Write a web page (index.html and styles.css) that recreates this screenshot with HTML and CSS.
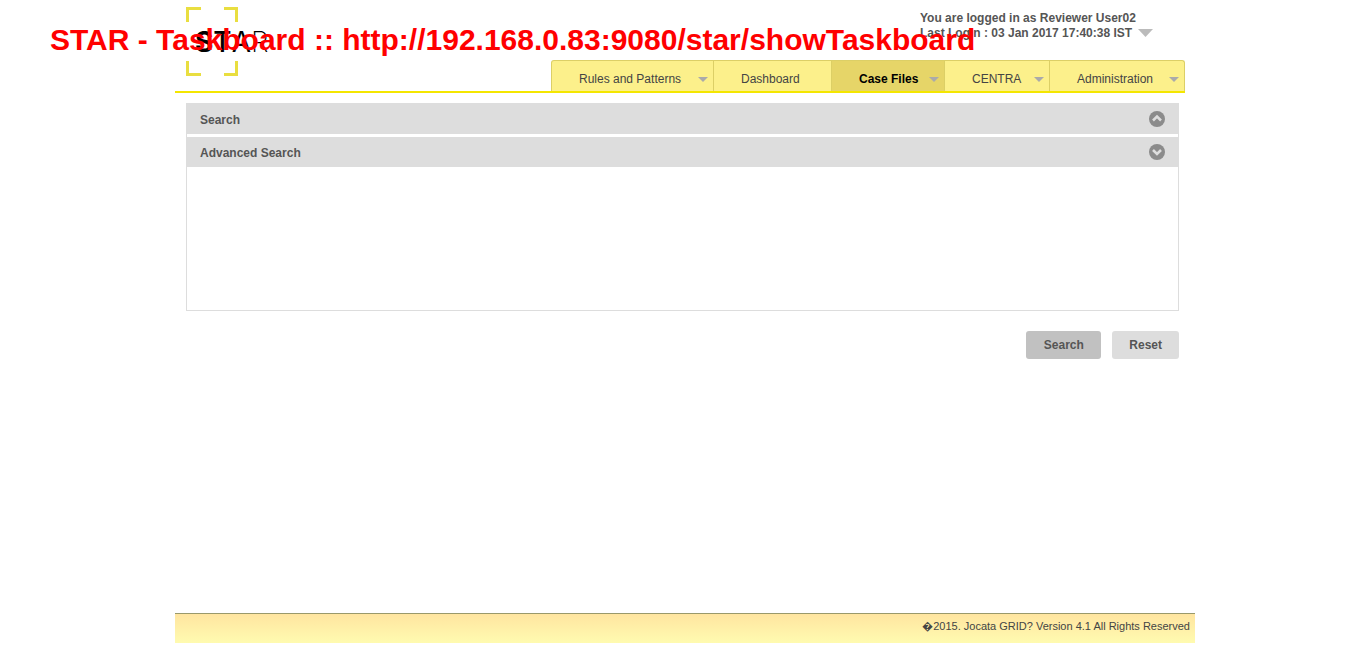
FILE: index.html
```html
<!DOCTYPE html>
<html lang="en">
<head>
<meta charset="utf-8">
<title>STAR - Taskboard</title>
<link rel="stylesheet" href="styles.css">
</head>
<body>
<div class="caption">STAR - Taskboard :: http://192.168.0.83:9080/star/showTaskboard</div>
<div class="page">
  <header class="header">
    <a class="logo" href="#" aria-label="STAR">
      <svg class="logo-frame" width="52" height="70" viewBox="0 0 52 70" fill="none" stroke="#e9de40" stroke-width="3" aria-hidden="true">
        <path d="M1.5 15V1.5H15M38 1.5H50.500V15M1.5 54V67.500H15M38 67.500H50.500V54"/>
      </svg>
      <span class="logo-text"><span class="w-heavy">S</span><span class="w-mid">T</span><span class="w-regular">A</span><span class="w-light">R</span></span>
    </a>
    <div class="header-right">
      <div class="user">
        <div>You are logged in as Reviewer User02</div>
        <div>Last Login : 03 Jan 2017 17:40:38 IST <button class="user-menu" aria-label="User menu"><svg width="15" height="8" viewBox="0 0 15 8" aria-hidden="true"><path d="M0 0H15L7.500 8Z" fill="#bbb"/></svg></button></div>
      </div>
      <nav class="nav">
        <a href="#" class="tab rules">Rules and Patterns<i class="arrow"></i></a>
        <a href="#" class="tab dashboard">Dashboard</a>
        <a href="#" class="tab cases active">Case Files<i class="arrow"></i></a>
        <a href="#" class="tab centra">CENTRA<i class="arrow"></i></a>
        <a href="#" class="tab admin">Administration<i class="arrow"></i></a>
      </nav>
    </div>
  </header>
  <main class="main">
    <section class="panel">
      <button class="bar"><span>Search</span>
        <svg width="16" height="16" viewBox="0 0 16 16" aria-hidden="true"><circle cx="8" cy="8" r="8" fill="#8b8b8b"/><path d="M4 9.500L8 5.500L12 9.500" fill="none" stroke="#ddd" stroke-width="2.500"/></svg>
      </button>
      <button class="bar"><span>Advanced Search</span>
        <svg width="16" height="16" viewBox="0 0 16 16" aria-hidden="true"><circle cx="8" cy="8" r="8" fill="#8b8b8b"/><path d="M4 6L8 10L12 6" fill="none" stroke="#ddd" stroke-width="2.500"/></svg>
      </button>
      <div class="panel-body"></div>
    </section>
    <div class="actions">
      <button class="btn primary">Search</button>
      <button class="btn">Reset</button>
    </div>
  </main>
  <footer class="footer">&#xFFFD;2015. Jocata GRID? Version 4.1 All Rights Reserved</footer>
</div>
</body>
</html>
```
FILE: styles.css
```css
* { box-sizing: border-box; }
body {
  margin: 0;
  padding-left: 21px;
  background: #fff;
  color: #555;
  font: 12px/15px "Liberation Sans", Arial, sans-serif;
}
button { border: 0; padding: 0; background: none; font: inherit; color: inherit; cursor: pointer; }
a { color: inherit; text-decoration: none; }
.caption {
  position: absolute;
  z-index: 5;
  top: 21px;
  left: 50px;
  color: #f00;
  font-size: 30px;
  font-weight: bold;
  line-height: 37px;
  white-space: nowrap;
  pointer-events: none;
}
.page {
  display: flex;
  flex-direction: column;
  max-width: 1020px;
  min-height: 100vh;
  margin: 0 auto;
  padding-bottom: 15px;
}
.header {
  display: flex;
  justify-content: space-between;
  margin-right: 10px;
  border-bottom: 2px solid #f4e600;
}
.logo { position: relative; margin: 7px 0 0 11px; color: #000; }
.logo-frame { display: block; }
.logo-text {
  position: absolute;
  top: 20px;
  left: 9px;
  font: 28px/30px Inter, sans-serif;
  white-space: nowrap;
}
.w-heavy { font-weight: 700; }
.w-mid { font-weight: 500; }
.w-regular { font-weight: 400; }
.w-light { font-weight: 200; }
.header-right { display: flex; flex-direction: column; width: 634px; }
.user { align-self: flex-end; width: 265px; padding: 11px 0 19px; font-weight: bold; }
.user-menu { margin-left: 3px; line-height: 8px; }
.user-menu svg { display: block; }
.nav {
  display: flex;
  height: 31px;
  background: #fcf08b;
  border: 1px solid #dccf66;
  border-bottom: 0;
  border-radius: 3px 3px 0 0;
  color: #444;
}
.tab {
  display: flex;
  align-items: center;
  justify-content: space-between;
  padding: 6px 5px 0 27px;
  border-right: 1px solid #dccf66;
}
.tab:last-child { border-right: 0; }
.rules { flex-basis: 162px; }
.dashboard { flex-basis: 118px; }
.cases { flex-basis: 113px; }
.centra { flex-basis: 105px; }
.admin { flex-basis: 134px; }
.active { background: #e6d568; color: #000; font-weight: bold; }
.arrow { border: 5px solid transparent; border-top-color: #aaa; border-bottom: 0; }
.main { margin: 10px 16px 0 11px; }
.panel { display: flex; flex-direction: column; gap: 3px; border: 1px solid #ddd; }
.bar {
  display: flex;
  align-items: center;
  justify-content: space-between;
  height: 30px;
  padding: 0 13px;
  background: #ddd;
  font-weight: bold;
}
.bar span { padding-top: 2px; }
.panel-body { height: 140px; }
.actions { display: flex; justify-content: flex-end; gap: 11px; margin-top: 20px; }
.btn { height: 28px; padding: 1px 17px 0; border-radius: 3px; background: #ddd; font-weight: bold; }
.primary { min-width: 75px; background: #c1c1c1; }
.footer {
  margin-top: auto;
  height: 30px;
  padding: 5px;
  border-top: 1px solid #99996b;
  background: linear-gradient(#ffe5a0, #fffbb0);
  color: #444;
  font-size: 11px;
  text-align: right;
}
.panel-body { margin-top: -3px; height: 143px; }
```
